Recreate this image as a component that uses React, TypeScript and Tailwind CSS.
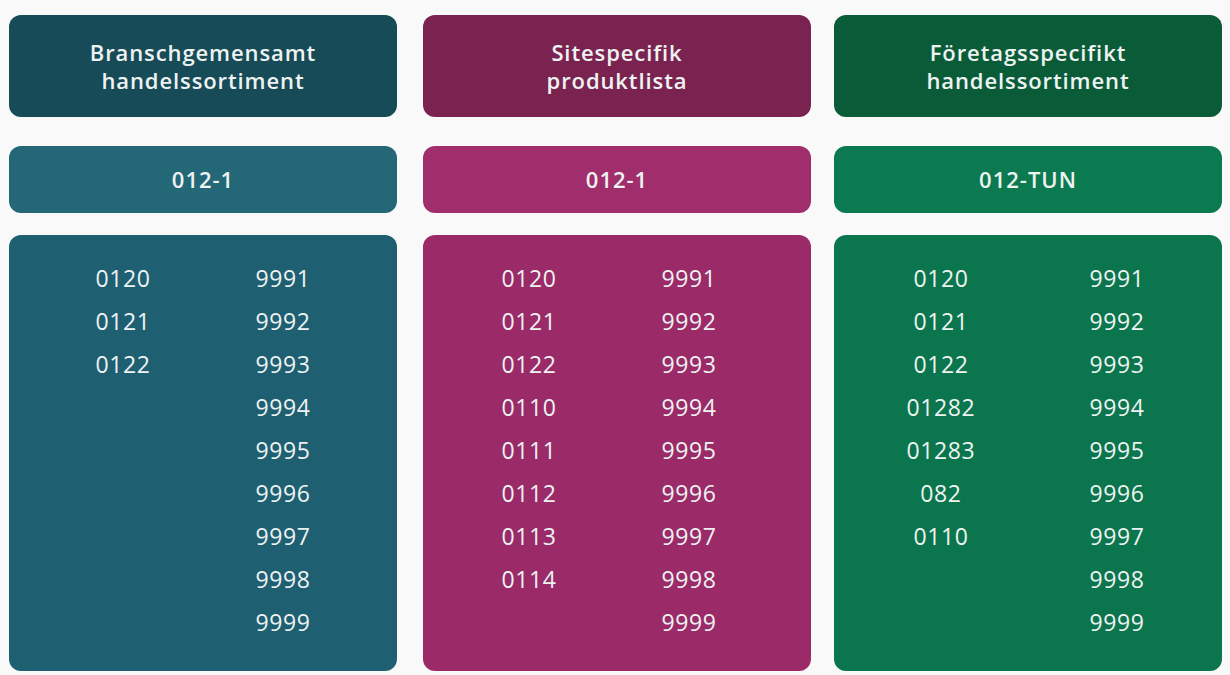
const columns = [
	{
		title: ["Branschgemensamt", "handelssortiment"],
		code: "012-1",
		head: "bg-[#164b57]",
		mid: "bg-[#246877]",
		body: "bg-[#1f5f72]",
		pad: "px-[34px]",
		gap: "",
		left: ["0120", "0121", "0122"],
	},
	{
		title: ["Sitespecifik", "produktlista"],
		code: "012-1",
		head: "bg-[#7b2350]",
		mid: "bg-[#a02d6c]",
		body: "bg-[#9b2a69]",
		pad: "pl-[26px] pr-[42px]",
		gap: "ml-[26px]",
		left: ["0120", "0121", "0122", "0110", "0111", "0112", "0113", "0114"],
	},
	{
		title: ["Företagsspecifikt", "handelssortiment"],
		code: "012-TUN",
		head: "bg-[#0a5c39]",
		mid: "bg-[#0c7a50]",
		body: "bg-[#0b754d]",
		pad: "pl-[19px] pr-[17px]",
		gap: "ml-[23px]",
		left: ["0120", "0121", "0122", "01282", "01283", "082", "0110"],
	},
];

const right = ["9991", "9992", "9993", "9994", "9995", "9996", "9997", "9998", "9999"];

export default function App() {
	return (
		<div
			className="h-[675px] w-[1230px] overflow-hidden bg-[#f9f9f9] pl-[9px] pt-[15px] text-[#eef3f2]"
			style={{ fontFamily: '"Open Sans", sans-serif' }}
		>
			<div className="flex">
				{columns.map((col, i) => (
					<div key={i} className={`flex w-[388px] flex-col ${col.gap}`}>
						{/* title */}
						<div
							className={`flex h-[102px] flex-col items-center justify-center rounded-[12px] ${col.head} text-[22px] font-semibold leading-[28px] tracking-[0.9px]`}
						>
							<span>{col.title[0]}</span>
							<span>{col.title[1]}</span>
						</div>

						{/* code */}
						<div
							className={`mt-[29px] flex h-[67px] items-center justify-center rounded-[12px] ${col.mid} text-[22px] font-semibold tracking-[1px]`}
						>
							{col.code}
						</div>

						{/* list */}
						<div
							className={`mt-[22px] grid h-[436px] grid-cols-2 content-start rounded-[12px] ${col.body} ${col.pad} pt-[22px] text-center text-[23px] font-medium leading-[43px] tracking-[0.6px]`}
						>
							<div className="flex flex-col">
								{col.left.map((n) => (
									<span key={n}>{n}</span>
								))}
							</div>
							<div className="flex flex-col">
								{right.map((n) => (
									<span key={n}>{n}</span>
								))}
							</div>
						</div>
					</div>
				))}
			</div>
		</div>
	);
}
